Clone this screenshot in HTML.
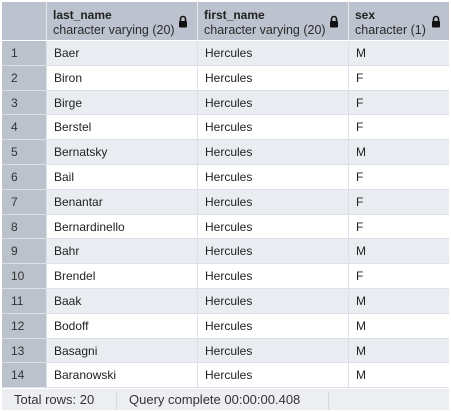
<!DOCTYPE html>
<html><head><style>
body{margin:0;width:451px;height:410px;overflow:hidden;background:#fff;font-family:"Liberation Sans",sans-serif;font-size:12px;color:#222;position:relative}
.hdr{position:absolute;top:2px;height:38px;background:#bdc3ce;border-right:1px solid #e4e7ec;box-sizing:border-box}
.hdr b{position:absolute;left:6px;top:6px;font-weight:bold;font-size:12px;color:#222}
.hdr span{position:absolute;left:6px;top:21px;font-size:12.5px;color:#2a2a2a}
.lock{position:absolute;top:13px;width:10px;height:13px}
.row{position:absolute;left:2px;width:447px;height:24.8px;border-bottom:1px solid #dde1e7;box-sizing:border-box}
.c{position:absolute;top:0;height:100%;line-height:24px;box-sizing:border-box;border-right:1px solid #dde1e7;padding-left:7px;font-size:12px}
.i{left:0;width:45px;background:#bcc2cc;padding-left:9px;color:#333}
.a{left:45px;width:151px}
.b{left:196px;width:151px}
.s{left:347px;width:100px;border-right:none}
.foot{position:absolute;left:2px;top:389px;width:447px;height:21px;background:#eceef2;font-size:13px;color:#333;line-height:22px}
</style></head><body>
<div class="hdr" style="left:2px;width:45px"></div>
<div class="hdr" style="left:47px;width:151px"><b>last_name</b><span>character varying (20)</span>
<svg class="lock" style="left:131px" viewBox="0 0 10 13"><path d="M2.5 6V4a2.5 2.5 0 0 1 5 0v2" fill="none" stroke="#111" stroke-width="1.6"/><rect x="1" y="6" width="8" height="6.5" rx="1" fill="#111"/></svg></div>
<div class="hdr" style="left:198px;width:151px"><b>first_name</b><span>character varying (20)</span>
<svg class="lock" style="left:131px" viewBox="0 0 10 13"><path d="M2.5 6V4a2.5 2.5 0 0 1 5 0v2" fill="none" stroke="#111" stroke-width="1.6"/><rect x="1" y="6" width="8" height="6.5" rx="1" fill="#111"/></svg></div>
<div class="hdr" style="left:349px;width:100px;border-right:none"><b>sex</b><span>character (1)</span>
<svg class="lock" style="left:82px" viewBox="0 0 10 13"><path d="M2.5 6V4a2.5 2.5 0 0 1 5 0v2" fill="none" stroke="#111" stroke-width="1.6"/><rect x="1" y="6" width="8" height="6.5" rx="1" fill="#111"/></svg></div>
<div id="rows"></div>
<div class="row" style="top:41px;background:#e9ecf1"><div class="c i">1</div><div class="c a">Baer</div><div class="c b">Hercules</div><div class="c s">M</div></div>
<div class="row" style="top:65.8px;background:#fff"><div class="c i">2</div><div class="c a">Biron</div><div class="c b">Hercules</div><div class="c s">F</div></div>
<div class="row" style="top:90.6px;background:#e9ecf1"><div class="c i">3</div><div class="c a">Birge</div><div class="c b">Hercules</div><div class="c s">F</div></div>
<div class="row" style="top:115.4px;background:#fff"><div class="c i">4</div><div class="c a">Berstel</div><div class="c b">Hercules</div><div class="c s">F</div></div>
<div class="row" style="top:140.2px;background:#e9ecf1"><div class="c i">5</div><div class="c a">Bernatsky</div><div class="c b">Hercules</div><div class="c s">M</div></div>
<div class="row" style="top:165px;background:#fff"><div class="c i">6</div><div class="c a">Bail</div><div class="c b">Hercules</div><div class="c s">F</div></div>
<div class="row" style="top:189.8px;background:#e9ecf1"><div class="c i">7</div><div class="c a">Benantar</div><div class="c b">Hercules</div><div class="c s">F</div></div>
<div class="row" style="top:214.6px;background:#fff"><div class="c i">8</div><div class="c a">Bernardinello</div><div class="c b">Hercules</div><div class="c s">F</div></div>
<div class="row" style="top:239.4px;background:#e9ecf1"><div class="c i">9</div><div class="c a">Bahr</div><div class="c b">Hercules</div><div class="c s">M</div></div>
<div class="row" style="top:264.2px;background:#fff"><div class="c i">10</div><div class="c a">Brendel</div><div class="c b">Hercules</div><div class="c s">F</div></div>
<div class="row" style="top:289px;background:#e9ecf1"><div class="c i">11</div><div class="c a">Baak</div><div class="c b">Hercules</div><div class="c s">M</div></div>
<div class="row" style="top:313.8px;background:#fff"><div class="c i">12</div><div class="c a">Bodoff</div><div class="c b">Hercules</div><div class="c s">M</div></div>
<div class="row" style="top:338.6px;background:#e9ecf1"><div class="c i">13</div><div class="c a">Basagni</div><div class="c b">Hercules</div><div class="c s">M</div></div>
<div class="row" style="top:363.4px;background:#fff"><div class="c i">14</div><div class="c a">Baranowski</div><div class="c b">Hercules</div><div class="c s">M</div></div>
<div class="foot"><span style="position:absolute;left:12px">Total rows: 20</span><span style="position:absolute;left:114px;top:2px;width:1px;height:19px;background:#d6d9df"></span><span style="position:absolute;left:127px">Query complete 00:00:00.408</span><span style="position:absolute;left:326px;top:2px;width:1px;height:19px;background:#d6d9df"></span></div>
</body></html>
